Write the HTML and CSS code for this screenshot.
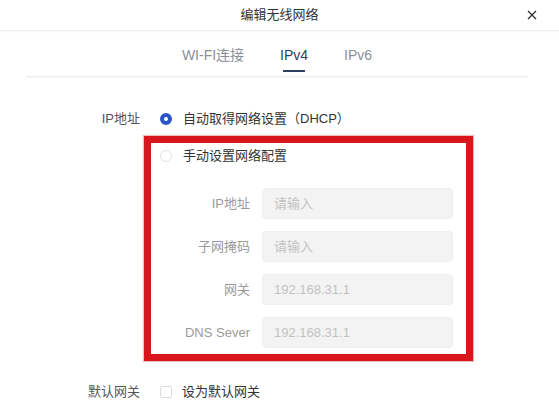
FILE: index.html
```html
<!DOCTYPE html>
<html lang="zh-CN">

<head>
    <meta charset="UTF-8">
    <meta name="viewport" content="width=device-width, initial-scale=1.0">
    <title>编辑无线网络</title>
    <link rel="stylesheet" href="styles.css">
</head>

<body>
    <div class="dialog">
        <header class="dialog-head">
            <span></span>
            <h1 class="dialog-title">编辑无线网络</h1>
            <button class="close" type="button">
                <svg width="10" height="10" viewBox="0 0 10 10">
                    <path d="M1 1 L9 9 M9 1 L1 9" stroke="#333" stroke-width="1.3" fill="none" />
                </svg>
            </button>
        </header>

        <nav class="tabs">
            <a class="tab">WI-FI连接</a>
            <a class="tab active">IPv4</a>
            <a class="tab">IPv6</a>
        </nav>

        <div class="form">
            <div class="row">
                <span class="row-label">IP地址</span>
                <label class="radio checked"><span class="dot"></span>自动取得网络设置（DHCP）</label>
            </div>

            <div class="manual">
                <label class="radio"><span class="dot"></span>手动设置网络配置</label>

                <div class="field">
                    <span class="field-label">IP地址</span>
                    <input type="text" placeholder="请输入">
                </div>
                <div class="field">
                    <span class="field-label">子网掩码</span>
                    <input type="text" placeholder="请输入">
                </div>
                <div class="field">
                    <span class="field-label">网关</span>
                    <input type="text" placeholder="192.168.31.1">
                </div>
                <div class="field">
                    <span class="field-label">DNS Sever</span>
                    <input type="text" placeholder="192.168.31.1">
                </div>
            </div>

            <div class="row row-bottom">
                <span class="row-label">默认网关</span>
                <label class="check"><span class="box"></span>设为默认网关</label>
            </div>
        </div>
    </div>
</body>

</html>
```

FILE: styles.css
```css
body {
    margin: 0;
    background-color: #fff;
    font-family: "Liberation Sans", "Noto Sans CJK SC", sans-serif;
    font-size: 13px;
    color: #333;
}

.dialog {
    width: 559px;
    height: 400px;
    overflow: hidden;
}

.dialog-head {
    display: grid;
    grid-template-columns: 1fr auto 1fr;
    align-items: center;
    height: 31px;
    padding-bottom: 1px;
    border-bottom: 1px solid #ececec;
    box-shadow: 0 1px 2px rgba(0, 0, 0, 0.03);
    box-sizing: border-box;
}

.dialog-title {
    margin: 0;
    font-size: 13px;
    font-weight: normal;
    color: #333;
    line-height: 20px;
}

.close {
    justify-self: end;
    margin-right: 22px;
    padding: 0;
    border: none;
    background: none;
    width: 10px;
    height: 10px;
    display: flex;
}

.tabs {
    display: flex;
    justify-content: center;
    gap: 36px;
    margin: 1px 31px 0 26px;
    border-bottom: 1px solid #ececec;
    box-shadow: 0 1px 1px rgba(0, 0, 0, 0.02);
}

.tab {
    padding-top: 13px;
    padding-bottom: 4px;
    font-size: 14px;
    line-height: 20px;
    color: #8a8f99;
}

.tab::after {
    content: "";
    display: block;
    width: 22px;
    height: 2px;
    margin: 5px auto 0;
}

.tab.active {
    color: #2e3f63;
}

.tab.active::after {
    background-color: #2e3f63;
}

.form {
    margin-top: 32px;
}

.row {
    display: flex;
    align-items: center;
    line-height: 20px;
}

.row-label {
    width: 140px;
    margin-right: 20px;
    text-align: right;
    color: #555;
}

.radio,
.check {
    display: flex;
    align-items: center;
    gap: 11px;
    color: #333;
}

.dot {
    width: 12px;
    height: 12px;
    border: 1px solid #e2e2e2;
    border-radius: 50%;
    box-sizing: border-box;
    background-color: #fff;
}

.radio.checked .dot {
    border: 4px solid #2b55c6;
}

.manual {
    width: 329px;
    margin: 7px 0 0 144px;
    padding: 3px 13px 6px 9px;
    border: 7px solid #d9161b;
    box-shadow: 0 0 1px 1px rgba(160, 0, 0, 0.25);
    box-sizing: border-box;
    line-height: 20px;
}

.field {
    display: flex;
    align-items: center;
    gap: 12px;
    margin-top: 12px;
}

.radio + .field {
    margin-top: 22px;
}

.field-label {
    width: 90px;
    text-align: right;
    color: #9a9a9a;
}

.field input {
    flex: 1;
    min-width: 0;
    height: 31px;
    padding: 0 11px;
    border: 1px solid #efefef;
    border-radius: 4px;
    background-color: #f3f3f3;
    box-sizing: border-box;
    font-family: inherit;
    font-size: 13px;
    color: #333;
}

.field input::placeholder {
    color: #c2c2c2;
}

.row-bottom {
    margin-top: 21px;
}

.check {
    gap: 10px;
}

.box {
    width: 12px;
    height: 12px;
    border: 1px solid #dcdcdc;
    border-radius: 2px;
    box-sizing: border-box;
}
```
